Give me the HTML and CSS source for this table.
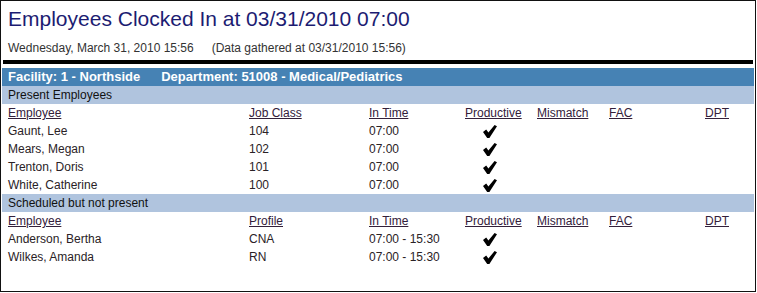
FILE: index.html
```html
<!DOCTYPE html>
<html>
<head>
<meta charset="utf-8">
<link rel="stylesheet" href="styles.css">
</head>
<body>
<div class="frame">
  <h1 class="title">Employees Clocked In at 03/31/2010 07:00</h1>
  <div class="subtitle"><span>Wednesday, March 31, 2010 15:56</span><span class="gathered">(Data gathered at 03/31/2010 15:56)</span></div>
  <div class="rule"></div>
  <div class="facility"><span>Facility: 1 - Northside</span><span class="dept">Department: 51008 - Medical/Pediatrics</span></div>

  <div class="section">Present Employees</div>
  <div class="row head">
    <span>Employee</span><span>Job Class</span><span>In Time</span><span>Productive</span><span>Mismatch</span><span>FAC</span><span>DPT</span>
  </div>
  <div class="row"><span>Gaunt, Lee</span><span>104</span><span>07:00</span><span class="chk"><svg viewBox="0 0 14 13" width="14" height="13"><path d="M0 7 L3.2 4.6 L5.4 7.6 L11.6 0 L14 1.2 L6.4 13 L4.2 13 Z"/></svg></span><span></span><span></span><span></span></div>
  <div class="row"><span>Mears, Megan</span><span>102</span><span>07:00</span><span class="chk"><svg viewBox="0 0 14 13" width="14" height="13"><path d="M0 7 L3.2 4.6 L5.4 7.6 L11.6 0 L14 1.2 L6.4 13 L4.2 13 Z"/></svg></span><span></span><span></span><span></span></div>
  <div class="row"><span>Trenton, Doris</span><span>101</span><span>07:00</span><span class="chk"><svg viewBox="0 0 14 13" width="14" height="13"><path d="M0 7 L3.2 4.6 L5.4 7.6 L11.6 0 L14 1.2 L6.4 13 L4.2 13 Z"/></svg></span><span></span><span></span><span></span></div>
  <div class="row"><span>White, Catherine</span><span>100</span><span>07:00</span><span class="chk"><svg viewBox="0 0 14 13" width="14" height="13"><path d="M0 7 L3.2 4.6 L5.4 7.6 L11.6 0 L14 1.2 L6.4 13 L4.2 13 Z"/></svg></span><span></span><span></span><span></span></div>

  <div class="section">Scheduled but not present</div>
  <div class="row head">
    <span>Employee</span><span>Profile</span><span>In Time</span><span>Productive</span><span>Mismatch</span><span>FAC</span><span>DPT</span>
  </div>
  <div class="row"><span>Anderson, Bertha</span><span>CNA</span><span>07:00 - 15:30</span><span class="chk"><svg viewBox="0 0 14 13" width="14" height="13"><path d="M0 7 L3.2 4.6 L5.4 7.6 L11.6 0 L14 1.2 L6.4 13 L4.2 13 Z"/></svg></span><span></span><span></span><span></span></div>
  <div class="row"><span>Wilkes, Amanda</span><span>RN</span><span>07:00 - 15:30</span><span class="chk"><svg viewBox="0 0 14 13" width="14" height="13"><path d="M0 7 L3.2 4.6 L5.4 7.6 L11.6 0 L14 1.2 L6.4 13 L4.2 13 Z"/></svg></span><span></span><span></span><span></span></div>
</div>
</body>
</html>
```

FILE: styles.css
```css
html, body {
  margin: 0;
  padding: 0;
  background: #fff;
}

.frame {
  box-sizing: border-box;
  width: 756px;
  height: 292px;
  border: 1px solid #111;
  padding: 0 1px;
  font-family: "Liberation Sans", Arial, sans-serif;
  font-size: 12px;
  color: #2a2a2a;
  overflow: hidden;
}

.title {
  margin: 6px 0 9px 0;
  padding-left: 6px;
  font-size: 21px;
  line-height: 24px;
  font-weight: normal;
  color: #1c1c72;
}

.subtitle {
  padding-left: 6px;
  line-height: 16px;
  font-size: 12px;
  color: #333;
}

.gathered {
  margin-left: 18px;
}

.rule {
  margin: 4px 1px 4px 1px;
  height: 4px;
  background: #000;
}

.facility {
  height: 18px;
  line-height: 18px;
  padding-left: 6px;
  background: #4682b4;
  color: #fff;
  font-weight: bold;
  font-size: 13px;
}

.dept {
  margin-left: 21px;
}

.section {
  height: 18px;
  line-height: 18px;
  padding-left: 6px;
  background: #b0c4de;
  color: #111;
}

.row {
  display: grid;
  grid-template-columns: 241px 120px 96px 72px 72px 96px 1fr;
  height: 18px;
  line-height: 18px;
  padding-left: 6px;
  color: #2a2226;
}

.row.head span {
  text-decoration: underline;
  color: #33203a;
}

.chk {
  display: flex;
  align-items: center;
  padding-left: 18px;
}

.chk svg {
  display: block;
  fill: #000;
}
```
